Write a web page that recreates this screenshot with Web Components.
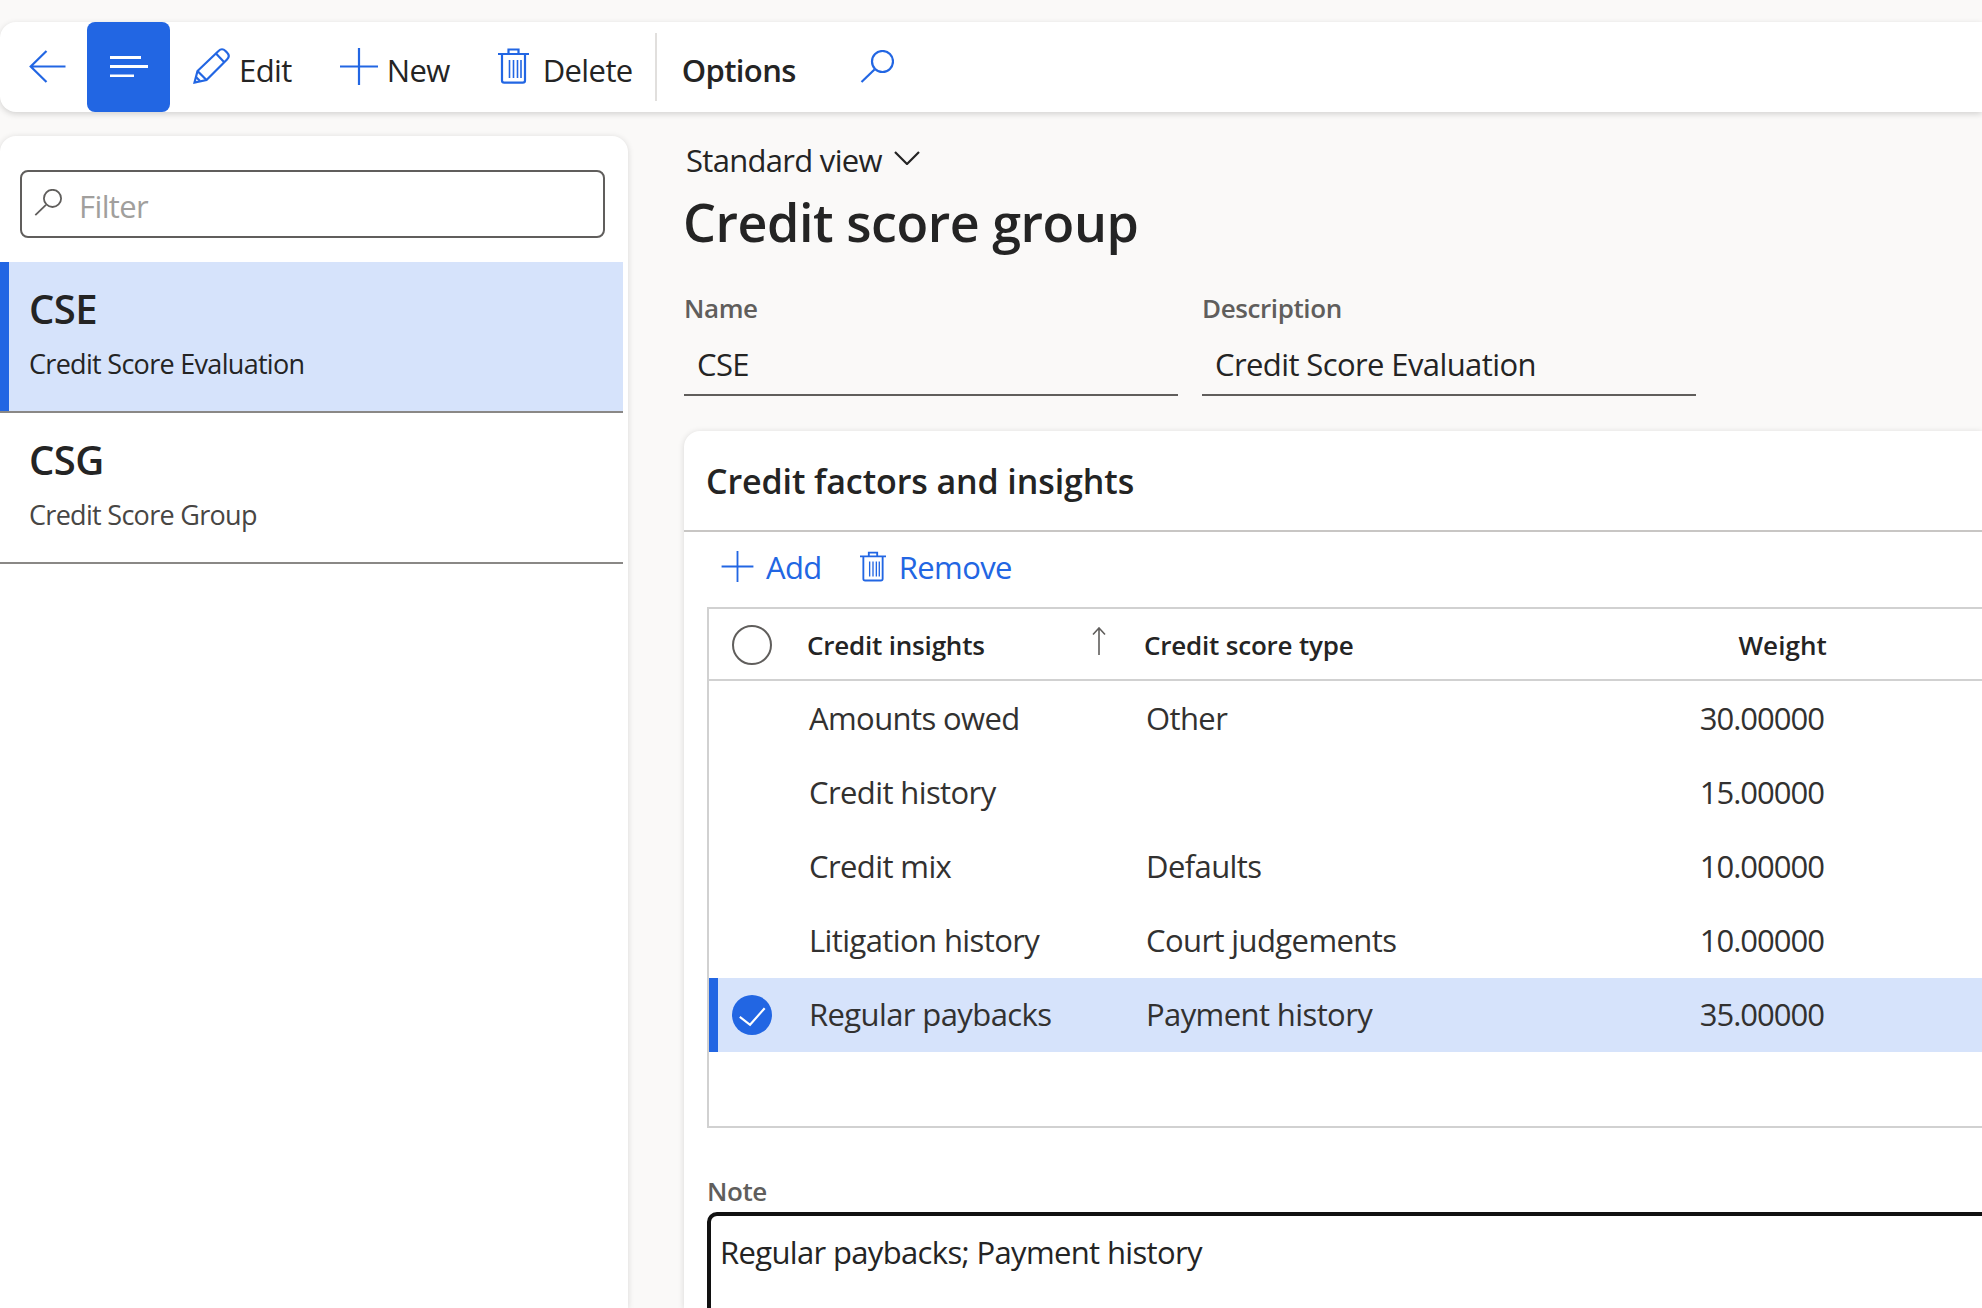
<!DOCTYPE html>
<html lang="en">
<head>
<meta charset="utf-8">
<title>Credit score group</title>
<style>
  html, body { margin: 0; height: 100%; }
  body {
    background: #faf9f8;
    color: #242424;
    font-family: "Open Sans", "Noto Sans", sans-serif;
    overflow: hidden;
    padding-top: 22px;
    box-sizing: border-box;
    height: 1308px;
  }
</style>
</head>
<body>
  <app-toolbar>
    <tool-button icon="back" slot="nav"></tool-button>
    <tool-button icon="menu" active slot="nav"></tool-button>
    <tool-button icon="pencil">Edit</tool-button>
    <tool-button icon="plus">New</tool-button>
    <tool-button icon="trash">Delete</tool-button>
    <tool-button strong slot="after">Options</tool-button>
    <tool-button icon="search" slot="after"></tool-button>
  </app-toolbar>

  <page-layout>
    <side-list slot="side">
      <side-item selected code="CSE">Credit Score Evaluation</side-item>
      <side-item code="CSG">Credit Score Group</side-item>
    </side-list>

    <page-header view="Standard view" title-text="Credit score group"></page-header>
    <field-row>
      <text-field label="Name">CSE</text-field>
      <text-field label="Description">Credit Score Evaluation</text-field>
    </field-row>

    <section-card heading="Credit factors and insights">
      <card-actions>
        <action-link icon="plus">Add</action-link>
        <action-link icon="trash">Remove</action-link>
      </card-actions>
      <factor-grid>
        <factor-row insight="Amounts owed" type="Other" weight="30.00000"></factor-row>
        <factor-row insight="Credit history" type="" weight="15.00000"></factor-row>
        <factor-row insight="Credit mix" type="Defaults" weight="10.00000"></factor-row>
        <factor-row insight="Litigation history" type="Court judgements" weight="10.00000"></factor-row>
        <factor-row selected insight="Regular paybacks" type="Payment history" weight="35.00000"></factor-row>
        <factor-row></factor-row>
      </factor-grid>
      <note-box label="Note">Regular paybacks; Payment history</note-box>
    </section-card>
  </page-layout>

<script>
// icons drawn at their real pixel size
const ICONS = {
  back: [37, 33, '<path d="M17.5 1 1.7 16.5 17.5 32M1.7 16.5H36.5"/>'],
  menu: [38, 21, '<path d="M0 1.5H31M0 10.5H38M0 20H24" stroke-width="3"/>'],
  pencil: [37, 36, '<path d="M1.5 34.5 4.5 23 25.5 3Q29-.5 32.5 3L34 4.5Q37.5 8 34 11.5L13.5 32Z"/><path d="M4.5 23 13.5 32M3 29l4 4M23 5.5l8.5 9"/>'],
  plus: [38, 37, '<path d="M19 0V37M0 18.5H38"/>'],
  trash: [31, 36, '<path d="M0 6H31M4 6V32.5Q4 34.7 6.2 34.7H24.8Q27 34.7 27 32.5V6M10.500 6V1.500H20.500V6"/><path d="M11.500 12V30M15.500 12V30M19.500 12V30M23 12V30" stroke-width="1.600"/>'],
  search: [34, 33, '<circle cx="22.500" cy="11.500" r="10.500"/><path d="M14.500 19.500 1.500 32"/>'],
  arrow: [14, 28, '<path d="M7 28V1M1 7.500 7 1 13 7.500" stroke-width="1.600"/>'],
  chevron: [26, 14, '<path d="M1 1 13 13 25 1"/>'],
  check: [41, 40, '<path d="M8 22 18.500 30 33.500 13"/>']
};
const iconSvg = (name, w, h) => {
  const [iw, ih, body] = ICONS[name];
  return `<svg width="${w || iw}" height="${h || ih}" viewBox="0 0 ${iw} ${ih}" fill="none" stroke="currentColor" stroke-width="2.200" aria-hidden="true">${body}</svg>`;
};

class Base extends HTMLElement {
  render(html) {
    if (!this.shadowRoot) this.attachShadow({ mode: 'open' });
    this.shadowRoot.innerHTML = html;
  }
}

class AppToolbar extends Base {
  connectedCallback() {
    this.render(`<style>
      :host { display: flex; align-items: stretch; height: 90px; background: #fff;
        border-radius: 16px 0 0 16px; box-shadow: 0 2px 6px rgba(0,0,0,.16); font-size: 31px; }
      .nav, .main, .after { display: flex; align-items: center; }
      .main { gap: 48px; padding-left: 23px; padding-right: 22px; }
      .sep { width: 2px; background: #e1dfdd; margin: 11px 0; }
      .after { gap: 64px; padding-left: 25px; }
    </style>
    <div class="nav"><slot name="nav"></slot></div>
    <div class="main"><slot></slot></div>
    <div class="sep"></div>
    <div class="after"><slot name="after"></slot></div>`);
  }
}

class ToolButton extends Base {
  connectedCallback() {
    const icon = this.getAttribute('icon');
    const hasText = this.textContent.trim() !== '';
    this.render(`<style>
      :host { display: flex; align-items: center; gap: 9px; height: 100%; color: #242424; letter-spacing: -.6px; }
      :host([active]) { width: 83px; background: #2266e3; border-radius: 8px; justify-content: center; box-sizing: border-box; }
      :host([icon="back"]) { width: 87px; padding-left: 29px; box-sizing: border-box; }
      :host([icon="trash"]) { gap: 14px; }
      :host([strong]) { font-weight: 600; }
      .i { display: flex; color: #2266e3; margin-top: -2px; }
      :host([active]) .i { color: #fff; margin-top: -2px; }
      .t { padding-top: 6px; line-height: 40px; }
    </style>
    ${icon ? `<span class="i">${iconSvg(icon)}</span>` : ''}${hasText ? '<span class="t"><slot></slot></span>' : ''}`);
  }
}

class PageLayout extends Base {
  connectedCallback() {
    this.render(`<style>
      :host { display: grid; grid-template-columns: 628px 1fr; height: 1172px; padding-top: 24px; box-sizing: content-box; }
      .main { padding-left: 56px; display: flex; flex-direction: column; margin-top: -24px; min-width: 0; min-height: 0; }
    </style>
    <slot name="side"></slot>
    <div class="main"><slot></slot></div>`);
  }
}

class SideList extends Base {
  connectedCallback() {
    this.render(`<style>
      :host { display: block; background: #fff; border-radius: 16px 16px 0 0; box-shadow: 0 1px 6px rgba(0,0,0,.14);
        padding: 34px 5px 0 0; }
      .filter { display: flex; align-items: center; gap: 17px; box-sizing: border-box; width: 585px; height: 68px; margin: 0 0 24px 20px;
        padding: 0 0 0 12px; border: 2px solid #605e5c; border-radius: 8px; color: #605e5c; }
      .filter span { color: #a19f9d; font-size: 31px; letter-spacing: -.6px; line-height: 40px; padding-top: 4px; }
      svg { display: block; margin-top: -3px; }
    </style>
    <div class="filter">${iconSvg('search', 28, 27)}<span>Filter</span></div>
    <slot></slot>`);
  }
}

class SideItem extends Base {
  connectedCallback() {
    this.render(`<style>
      :host { display: block; box-sizing: border-box; height: 151px; padding: 22px 0 0 29px; border-bottom: 2px solid #8a8886; color: #484644; }
      :host([selected]) { background: #d6e3fb; box-shadow: inset 9px 0 0 #2266e3; color: #242424; }
      .code { font-size: 40px; font-weight: 600; line-height: 50px; letter-spacing: -.6px; color: #242424; }
      .sub { font-size: 27px; line-height: 34px; margin-top: 13px; letter-spacing: -.7px; }
    </style>
    <div class="code">${this.getAttribute('code')}</div>
    <div class="sub"><slot></slot></div>`);
  }
}

class PageHeader extends Base {
  connectedCallback() {
    this.render(`<style>
      :host { display: block; padding-top: 28px; }
      .view { display: flex; align-items: center; gap: 12px; padding-left: 2px; font-size: 31px; line-height: 40px; letter-spacing: -.7px; }
      .view svg { margin-top: -5px; }
      h1 { margin: 9px 0 0 -1px; font-size: 52px; line-height: 66px; font-weight: 600; letter-spacing: -.45px; }
    </style>
    <div class="view"><span>${this.getAttribute('view')}</span>${iconSvg('chevron')}</div>
    <h1>${this.getAttribute('title-text')}</h1>`);
  }
}

class FieldRow extends Base {
  connectedCallback() {
    this.render(`<style>
      :host { display: flex; gap: 24px; padding-top: 37px; }
    </style><slot></slot>`);
  }
}

class TextField extends Base {
  connectedCallback() {
    this.render(`<style>
      :host { display: block; width: 494px; }
      label { display: block; font-size: 26px; line-height: 32px; font-weight: 600; color: #605e5c; letter-spacing: -.4px; }
      .v { margin-top: 20px; padding: 0 0 10px 13px; line-height: 40px; font-size: 31px; letter-spacing: -.6px; border-bottom: 2px solid #605e5c; }
    </style>
    <label>${this.getAttribute('label')}</label>
    <div class="v"><slot></slot></div>`);
  }
}

class SectionCard extends Base {
  connectedCallback() {
    this.render(`<style>
      :host { display: block; margin-top: 35px; background: #fff; border-radius: 16px 0 0 0; box-shadow: 0 1px 6px rgba(0,0,0,.14);
        flex: 1; min-height: 0; overflow: hidden; }
      h2 { margin: 0; box-sizing: border-box; height: 101px; padding: 28px 0 0 22px; font-size: 34px; line-height: 44px; font-weight: 600;
        letter-spacing: -.1px; border-bottom: 2px solid #c8c6c4; }
      .body { padding-left: 23px; }
    </style>
    <h2>${this.getAttribute('heading')}</h2>
    <div class="body"><slot></slot></div>`);
  }
}

class CardActions extends Base {
  connectedCallback() {
    this.render(`<style>
      :host { display: flex; align-items: center; gap: 38px; height: 75px; padding-left: 14px; }
    </style><slot></slot>`);
  }
}

class ActionLink extends Base {
  connectedCallback() {
    this.render(`<style>
      :host { display: flex; align-items: center; gap: 12px; color: #2266e3; font-size: 31px; letter-spacing: -.6px; }
      :host([icon="trash"]) { gap: 13px; }
      .i { display: flex; margin-bottom: 6px; }
      .t { line-height: 40px; padding-bottom: 5px; }
    </style>
    <span class="i">${iconSvg(this.getAttribute('icon'), this.getAttribute('icon') === 'plus' ? 33 : 26, 31)}</span>
    <span class="t"><slot></slot></span>`);
  }
}

const ROW_COLS = '100px 337px 480px 199px 1fr';

class FactorGrid extends Base {
  connectedCallback() {
    this.render(`<style>
      :host { display: block; border: 2px solid #d1d1d1; border-right: 0; }
      .head { display: grid; grid-template-columns: ${ROW_COLS}; align-items: center; height: 70px; margin-bottom: 1px; border-bottom: 2px solid #d1d1d1;
        font-size: 26px; font-weight: 600; letter-spacing: -.2px; line-height: 34px; }
      .sel { width: 40px; height: 40px; margin: 1px 0 0 23px; box-sizing: border-box; border: 2px solid #605e5c; border-radius: 50%; }
      .c2 { display: flex; justify-content: space-between; align-items: center; margin-left: -2px; padding-right: 40px; }
      .c2 svg { color: #605e5c; margin-top: -6px; }
      .c3 { margin-left: -2px; }
      .t { padding-top: 1px; }
      .w { text-align: right; margin-right: -2px; letter-spacing: .1px; }
    </style>
    <div class="head">
      <div class="sel"></div>
      <div class="c2"><span class="t">Credit insights</span>${iconSvg('arrow')}</div>
      <div class="c3 t">Credit score type</div>
      <div class="t w">Weight</div>
    </div>
    <slot></slot>`);
  }
}

class FactorRow extends Base {
  connectedCallback() {
    const a = n => this.getAttribute(n) || '';
    this.render(`<style>
      :host { display: grid; grid-template-columns: ${ROW_COLS}; align-items: center; height: 74px; font-size: 31px; letter-spacing: -.6px; color: #323130; }
      :host([selected]) { background: #d6e3fb; box-shadow: inset 9px 0 0 #2266e3; }
      .dot { display: none; width: 40px; height: 40px; margin-left: 23px; border-radius: 50%; background: #2266e3; color: #fff; }
      :host([selected]) .dot { display: block; }
      .cell { line-height: 40px; padding-bottom: 3px; }
      .r { text-align: right; letter-spacing: -1px; padding-right: 1px; }
      svg { display: block; }
    </style>
    <div><div class="dot">${iconSvg('check', 40, 40)}</div></div>
    <div class="cell">${a('insight')}</div>
    <div class="cell">${a('type')}</div>
    <div class="cell r">${a('weight')}</div>`);
  }
}

class NoteBox extends Base {
  connectedCallback() {
    this.render(`<style>
      :host { display: block; padding-top: 47px; }
      label { display: block; font-size: 26px; line-height: 32px; font-weight: 600; color: #605e5c; letter-spacing: -.4px; }
      .box { margin: 5px -20px 0 0; height: 200px; box-sizing: border-box; padding: 16px 0 0 9px; border: 4px solid #111; border-radius: 10px;
        font-size: 31px; line-height: 40px; letter-spacing: -.65px; }
    </style>
    <label>${this.getAttribute('label')}</label>
    <div class="box"><slot></slot></div>`);
  }
}

customElements.define('app-toolbar', AppToolbar);
customElements.define('tool-button', ToolButton);
customElements.define('page-layout', PageLayout);
customElements.define('side-list', SideList);
customElements.define('side-item', SideItem);
customElements.define('page-header', PageHeader);
customElements.define('field-row', FieldRow);
customElements.define('text-field', TextField);
customElements.define('section-card', SectionCard);
customElements.define('card-actions', CardActions);
customElements.define('action-link', ActionLink);
customElements.define('factor-grid', FactorGrid);
customElements.define('factor-row', FactorRow);
customElements.define('note-box', NoteBox);
</script>
</body>
</html>
